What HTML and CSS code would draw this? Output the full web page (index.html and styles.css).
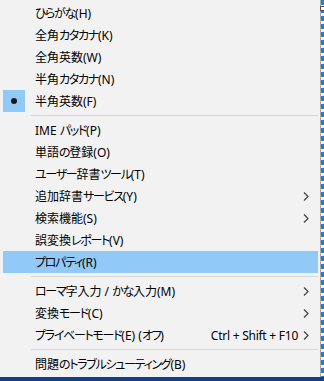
FILE: index.html
```html
<!DOCTYPE html>
<html lang="ja">
<head>
    <meta charset="UTF-8">
    <meta name="viewport" content="width=device-width, initial-scale=1.0">
    <title>IME メニュー</title>
    <link rel="stylesheet" href="styles.css">
</head>
<body>
    <div class="screen">
        <div class="menu">
            <div class="item"><span class="check"></span><span class="label"><span class="kana">ひらがな</span>(H)</span></div>
            <div class="item"><span class="check"></span><span class="label">全角<span class="kana">カタカナ</span>(K)</span></div>
            <div class="item"><span class="check"></span><span class="label">全角英数(W)</span></div>
            <div class="item"><span class="check"></span><span class="label">半角<span class="kana">カタカナ</span>(N)</span></div>
            <div class="item"><span class="check on"><span class="dot"></span></span><span class="label">半角英数(F)</span></div>
            <div class="sep"></div>
            <div class="item"><span class="check"></span><span class="label">IME <span class="kana">パッド</span>(P)</span></div>
            <div class="item"><span class="check"></span><span class="label">単語<span class="kana">の</span>登録(O)</span></div>
            <div class="item"><span class="check"></span><span class="label"><span class="kana">ユーザー</span>辞書<span class="kana">ツール</span>(T)</span></div>
            <div class="item"><span class="check"></span><span class="label">追加辞書<span class="kana">サービス</span>(Y)</span>
                <svg class="arrow" viewBox="0 0 6 9"><polyline points="1,0.5 5,4.5 1,8.5"/></svg></div>
            <div class="item"><span class="check"></span><span class="label">検索機能(S)</span>
                <svg class="arrow" viewBox="0 0 6 9"><polyline points="1,0.5 5,4.5 1,8.5"/></svg></div>
            <div class="item"><span class="check"></span><span class="label">誤変換<span class="kana">レポート</span>(V)</span></div>
            <div class="item hover"><span class="check"></span><span class="label"><span class="kana">プロパティ</span>(R)</span></div>
            <div class="sep"></div>
            <div class="item"><span class="check"></span><span class="label"><span class="kana">ローマ</span>字入力 / <span class="kana">かな</span>入力(M)</span>
                <svg class="arrow" viewBox="0 0 6 9"><polyline points="1,0.5 5,4.5 1,8.5"/></svg></div>
            <div class="item"><span class="check"></span><span class="label">変換<span class="kana">モード</span>(C)</span>
                <svg class="arrow" viewBox="0 0 6 9"><polyline points="1,0.5 5,4.5 1,8.5"/></svg></div>
            <div class="item"><span class="check"></span><span class="label"><span class="kana">プライベートモード</span>(E) (<span class="kana">オフ</span>)</span>
                <span class="shortcut">Ctrl + Shift + F10</span>
                <svg class="arrow" viewBox="0 0 6 9"><polyline points="1,0.5 5,4.5 1,8.5"/></svg></div>
            <div class="sep"></div>
            <div class="item"><span class="check"></span><span class="label">問題<span class="kana">のトラブルシューティング</span>(B)</span></div>
        </div>
        <div class="edge"></div>
        <span class="handle"></span>
    </div>
    <div class="taskbar"></div>
</body>
</html>
```

FILE: styles.css
```css
body {
    margin: 0;
    background-color: #f2f2f2;
    font-family: "Noto Sans", "Noto Sans CJK JP", sans-serif;
    font-size: 12px;
    color: #000;
}
.screen {
    position: relative;
    display: flex;
    height: 377px;
}
.menu {
    width: 321px;
    padding: 2px 2px 2px 3px;
    box-sizing: border-box;
    background-color: #f2f2f2;
}
.item {
    display: flex;
    align-items: center;
    height: 22px;
    padding-right: 9px;
    white-space: nowrap;
}
.item.hover {
    background-color: #91c9f7;
}
.check {
    display: flex;
    align-items: center;
    justify-content: center;
    width: 22px;
    height: 22px;
    margin-right: 10px;
}
.check.on {
    background-color: #91c9f7;
}
.dot {
    width: 6px;
    height: 6px;
    border-radius: 50%;
    background-color: #1a1a1a;
}
.label {
    flex: 1;
    font-feature-settings: "palt";
}
/* kana in the original UI font are narrower than in Noto */
.kana {
    letter-spacing: -1.3px;
}
.shortcut {
    margin-right: 5px;
    letter-spacing: -0.25px;
}
.arrow {
    width: 6px;
    height: 9px;
    fill: none;
    stroke: #404040;
    stroke-width: 1.2;
}
.sep {
    height: 1px;
    margin: 3px 0 3px 28px;
    background-color: #d7d7d7;
}
.edge {
    width: 3px;
    border-left: 1px solid #a8a8a8;
    background: repeating-linear-gradient(to bottom, #1e7fe3 0 5px, #ffffff 5px 8px);
}
.handle {
    position: absolute;
    left: 320px;
    top: 6px;
    width: 6px;
    height: 5px;
    box-sizing: border-box;
    border: 1px solid #505050;
    background-color: #fff;
}
.taskbar {
    height: 4px;
    background-color: #123f86;
}
```
